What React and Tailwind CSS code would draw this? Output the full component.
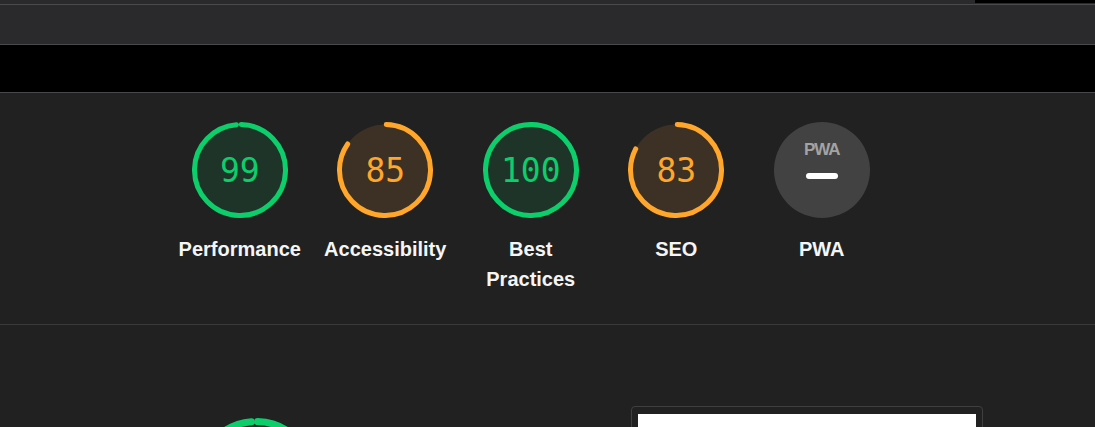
const categories = [
  { label: ["Performance"], score: 0.99, tone: "pass" },
  { label: ["Accessibility"], score: 0.85, tone: "average" },
  { label: ["Best", "Practices"], score: 1, tone: "pass" },
  { label: ["SEO"], score: 0.83, tone: "average" },
];

const tones = {
  pass: { stroke: "#0cce6b", fill: "#1f3428", text: "text-[#0cce6b]" },
  average: { stroke: "#ffa62b", fill: "#3c3124", text: "text-[#ffa62b]" },
};

// same arc math lighthouse uses, just with our own radius / stroke
const Arc = ({ size, stroke, score, color, fill }) => {
  const r = (size - stroke) / 2;
  const c = 2 * Math.PI * r;
  const adjust = ((0.25 * stroke) / c) * 360;
  let len = score * c - stroke / 2;
  if (score === 1) len = c;
  return (
    <svg width={size} height={size} viewBox={`0 0 ${size} ${size}`} className="block">
      <circle cx={size / 2} cy={size / 2} r={r} fill={fill} />
      <circle
        cx={size / 2}
        cy={size / 2}
        r={r}
        fill="none"
        stroke={color}
        strokeWidth={stroke}
        strokeLinecap="round"
        strokeDasharray={`${Math.max(len, 0)} ${c}`}
        transform={`rotate(${-90 + adjust} ${size / 2} ${size / 2})`}
      />
    </svg>
  );
};

const Gauge = ({ label, score, tone }) => {
  const t = tones[tone];
  return (
    <div className="w-[145.5px] flex flex-col items-center">
      <div className="relative w-[96px] h-[96px]">
        <Arc size={96} stroke={5} score={score} color={t.stroke} fill={t.fill} />
        <div
          className={`absolute inset-0 flex items-center justify-center pt-[1px] text-[33px] ${t.text} font-['DejaVu_Sans_Mono','Liberation_Mono',monospace]`}
        >
          {Math.round(score * 100)}
        </div>
      </div>
      <div className="mt-[16px] text-[20px] leading-[30px] font-bold text-[#f5f5f5] text-center">
        {label.map((l) => (
          <div key={l}>{l}</div>
        ))}
      </div>
    </div>
  );
};

const PwaGauge = () => (
  <div className="w-[145.5px] flex flex-col items-center">
    <div className="w-[96px] h-[96px] rounded-full bg-[#424242] flex flex-col items-center pt-[18px]">
      <div className="text-[17px] leading-[19px] font-bold tracking-[-1px] text-[#a3a3a3]">PWA</div>
      <div className="mt-[14px] w-[32px] h-[6px] rounded-full bg-white" />
    </div>
    <div className="mt-[16px] text-[20px] leading-[30px] font-bold text-[#f5f5f5]">PWA</div>
  </div>
);

export default function App() {
  return (
    <div className="w-[1095px] h-[427px] overflow-hidden bg-[#212121] font-['Liberation_Sans',Arial,sans-serif]">
      <div className="h-[5px] bg-[#2a2a2c] border-b border-[#4a4a4d] flex justify-end">
        <div className="w-[120px] h-[3px] bg-black" />
      </div>
      <div className="h-[40px] bg-[#2a2a2c] border-b border-[#4a4a4d]" />
      <div className="h-[48px] bg-black border-b border-[#48484a]" />

      <div className="h-[232px] border-b border-[#3a3a3a] flex pl-[167px] pt-[29px]">
        {categories.map((c) => (
          <Gauge key={c.label[0]} {...c} />
        ))}
        <PwaGauge />
      </div>

      <div className="flex items-start pl-[196px] pt-[81px]">
        <div className="mt-[12px]">
          <Arc size={120} stroke={7} score={0.99} color="#0cce6b" fill="#1f3428" />
        </div>
        <div className="ml-[315px] w-[352px] h-[200px] border border-[#3f3f3f] rounded-[4px] px-[6px] pt-[7px]">
          <div className="h-full bg-white" />
        </div>
      </div>
    </div>
  );
}
